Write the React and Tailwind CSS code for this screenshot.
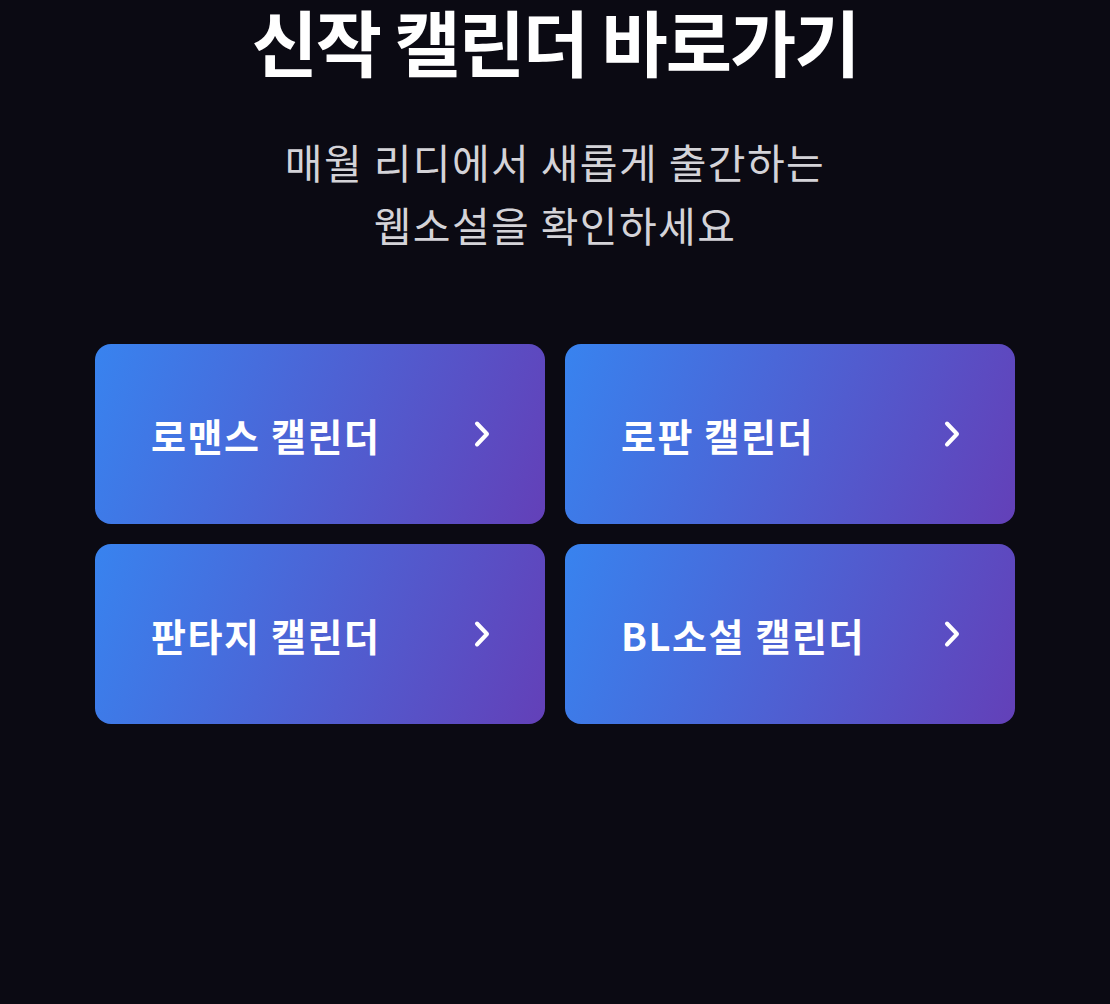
import React from 'react';

const calendars = [
    { label: '로맨스 캘린더' },
    { label: '로판 캘린더' },
    { label: '판타지 캘린더' },
    { label: 'BL소설 캘린더' },
];

function Chevron() {
    return (
        <svg width="20" height="28" viewBox="0 0 20 28" fill="none" className="shrink-0">
            <path d="M5 3.5 L15 14 L5 24.5" stroke="white" strokeWidth="4" strokeLinecap="round" strokeLinejoin="round" />
        </svg>
    );
}

export default function App() {
    return (
        <div className="min-h-screen bg-[#0b0a13] text-white flex flex-col items-center overflow-hidden" style={{ fontFamily: '"Noto Sans CJK KR", "Noto Sans", sans-serif' }}>
            {/* heading */}
            <h1 className="mt-[4px] text-[72px] font-bold leading-[72px] tracking-[-2px] text-white">
                신작 캘린더 바로가기
            </h1>

            <p className="mt-[54px] text-[41px] leading-[63px] tracking-[1.4px] text-[#d4d3d8] text-center">
                매월 리디에서 새롭게 출간하는
                <br />
                웹소설을 확인하세요
            </p>

            {/* calendar links */}
            <div className="mt-[88px] grid grid-cols-2 gap-5 w-[920px]">
                {calendars.map((c) => (
                    <button
                        key={c.label}
                        className="h-[180px] rounded-2xl bg-[linear-gradient(110deg,#3883ef,#6340b8)] flex items-center justify-between pl-[56px] pr-[53px]"
                    >
                        <span className="text-[38px] font-bold tracking-[1.6px] text-white">{c.label}</span>
                        <Chevron />
                    </button>
                ))}
            </div>
        </div>
    );
}
